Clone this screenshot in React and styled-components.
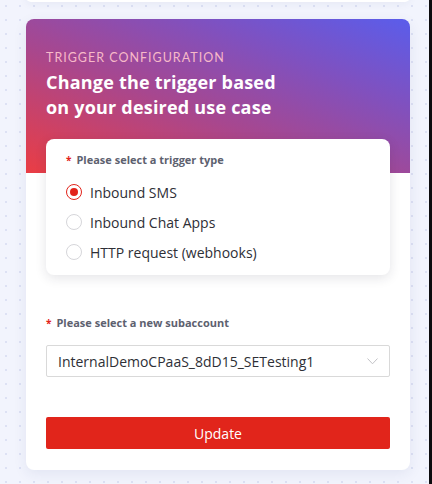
import React, { useState } from "react";
import styled, { createGlobalStyle } from "styled-components";

const GlobalStyle = createGlobalStyle`
  html, body {
    margin: 0;
    padding: 0;
    height: 100%;
  }
  body {
    font-family: "Open Sans", "Noto Sans", sans-serif;
    background: #f2f4fd;
    overflow: hidden;
  }
`;

const Page = styled.div`
  display: flex;
  height: 484px;
`;

const Main = styled.div`
  flex: 1;
  padding: 0 19px 0 26px;
  background-color: #f2f4fd;
  background-image: radial-gradient(circle, #dde1f4 1px, transparent 1.3px);
  background-size: 14px 14px;
  background-position: -1px -1px;
`;

const Edge = styled.div`
  width: 3px;
  background: #0c0c0e;
`;

const PrevCard = styled.div`
  height: 10px;
  margin-top: -8px;
  background: #ffffff;
  border-radius: 8px;
  box-shadow: 0 2px 8px rgba(40, 50, 110, 0.06);
`;

const Card = styled.div`
  margin-top: 17px;
  padding: 31px 20px 21px;
  border-radius: 8px;
  background:
    linear-gradient(to top right, #ea3d44 0%, #a7478f 42%, #7f51c0 72%, #5a5deb 100%) top / 100% 154px no-repeat,
    #ffffff;
  box-shadow: 0 4px 14px rgba(40, 50, 110, 0.08);
`;

const Eyebrow = styled.div`
  font-family: "Lato", sans-serif;
  font-size: 12.5px;
  line-height: 16px;
  letter-spacing: 1px;
  color: #f7b9c8;
  text-transform: uppercase;
`;

const Title = styled.h1`
  margin: 4px 0 0;
  font-size: 18px;
  line-height: 25px;
  font-weight: 700;
  letter-spacing: 0.2px;
  color: #ffffff;
  max-width: 250px;
`;

const OptionsCard = styled.div`
  margin-top: 19px;
  padding: 14px 20px 8px;
  background: #ffffff;
  border-radius: 8px;
  box-shadow: 0 3px 12px rgba(30, 30, 60, 0.12);
`;

const Label = styled.div`
  display: flex;
  align-items: center;
  font-size: 11px;
  line-height: 14px;
  font-weight: 700;
  color: #5d616f;
  margin-top: ${({ $top }) => $top || 0}px;
`;

const Required = styled.span`
  color: #e2231a;
  font-size: 10px;
  margin-right: 5px;
`;

const RadioList = styled.div`
  margin-top: 10px;
`;

const RadioRow = styled.label`
  display: flex;
  align-items: center;
  gap: 8px;
  height: 30px;
  font-size: 14px;
  color: #2e2f36;
  cursor: pointer;
`;

const RadioCircle = styled.span`
  box-sizing: border-box;
  width: 16px;
  height: 16px;
  border-radius: 50%;
  border: 1px solid ${({ $on }) => ($on ? "#e2231a" : "#d6d6da")};
  display: flex;
  align-items: center;
  justify-content: center;

  &::after {
    content: "";
    width: 8px;
    height: 8px;
    border-radius: 50%;
    background: ${({ $on }) => ($on ? "#e2231a" : "transparent")};
  }
`;

const Select = styled.div`
  box-sizing: border-box;
  margin-top: 15px;
  height: 32px;
  display: flex;
  align-items: center;
  justify-content: space-between;
  padding: 0 11px 0 11px;
  border: 1px solid #d9d9d9;
  border-radius: 2px;
  font-size: 14px;
  color: #2e2f36;
`;

const UpdateButton = styled.button`
  display: block;
  width: 100%;
  height: 32px;
  margin-top: 40px;
  border: none;
  border-radius: 2px;
  background: #e1251b;
  color: #ffffff;
  font-family: inherit;
  font-size: 14px;
  cursor: pointer;
`;

const Chevron = () => (
  <svg width="11" height="7" viewBox="0 0 11 7" fill="none">
    <polyline points="0.5,0.5 5.5,5.8 10.5,0.5" stroke="#c2c2c6" strokeWidth="1" />
  </svg>
);

const options = ["Inbound SMS", "Inbound Chat Apps", "HTTP request (webhooks)"];

const App = () => {
  const [selected, setSelected] = useState(0);

  return (
    <>
      <GlobalStyle />
      <Page>
        <Main>
          <PrevCard />
          <Card>
            <Eyebrow>Trigger configuration</Eyebrow>
            <Title>Change the trigger based on your desired use case</Title>
            <OptionsCard>
              <Label>
                <Required>*</Required>Please select a trigger type
              </Label>
              <RadioList>
                {options.map((option, index) => (
                  <RadioRow key={option} onClick={() => setSelected(index)}>
                    <RadioCircle $on={selected === index} />
                    {option}
                  </RadioRow>
                ))}
              </RadioList>
            </OptionsCard>
            <Label $top={41}>
              <Required>*</Required>Please select a new subaccount
            </Label>
            <Select>
              InternalDemoCPaaS_8dD15_SETesting1
              <Chevron />
            </Select>
            <UpdateButton>Update</UpdateButton>
          </Card>
        </Main>
        <Edge />
      </Page>
    </>
  );
};

export default App;
